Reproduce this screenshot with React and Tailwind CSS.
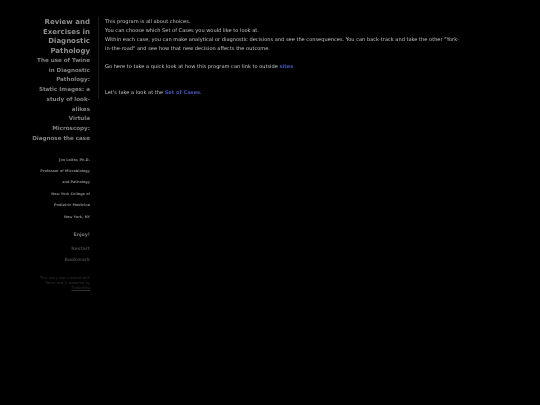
export default function App() {
  const font = { fontFamily: '"DejaVu Sans", Verdana, sans-serif' };
  return (
    <div className="min-h-[405px] w-[540px] bg-black flex items-start overflow-hidden antialiased [text-rendering:geometricPrecision]" style={font}>
      <aside className="w-[90px] shrink-0 pl-[20px] pt-[18px] text-right font-bold will-change-transform">
        <h1 className="text-[7px] leading-[9.7px] text-[#8f8f8f] font-bold">Review and Exercises in Diagnostic Pathology</h1>
        <div className="text-[5.6px] leading-[9.75px] text-[#808080]">
          <p>The use of Twine</p>
          <p>in Diagnostic</p>
          <p>Pathology:</p>
          <p>Static Images: a</p>
          <p>study of look-</p>
          <p>alikes</p>
          <p>Virtula</p>
          <p>Microscopy:</p>
          <p>Diagnose the case</p>
        </div>
        <div className="mt-[10px] text-[3.45px] leading-[11.4px] text-[#808080]">
          <p>Jim Leifer, Ph.D.</p>
          <p>Professor of Microbiology</p>
          <p>and Pathology</p>
          <p>New York College of</p>
          <p>Podiatric Medicine</p>
          <p>New York, NY</p>
        </div>
        <p className="mt-[7px] text-[4.7px] leading-[11px] text-[#777777]">Enjoy!</p>
        <p className="mt-[3px] text-[4.5px] leading-[11px] text-[#404040]">Restart</p>
        <p className="text-[4.5px] leading-[11px] text-[#404040]">Bookmark</p>
        <p className="ml-auto mt-[10px] w-[52px] text-[3.65px] leading-[5.2px] font-normal text-[#303030]">This story was created with Twine and is powered by <span className="underline">TiddlyWiki</span></p>
      </aside>
      <main className="ml-[8px] mt-[17px] w-[365px] border-l border-[#1c1c1c] pl-[6px] pt-[1px] text-[5.08px] leading-[9px] text-[#c4c4c4] will-change-transform">
        <p>This program is all about choices.</p>
        <p>You can choose which Set of Cases you would like to look at.</p>
        <p>Within each case, you can make analytical or diagnostic decisions and see the consequences. You can back-track and take the other "York-in-the-road" and see how that new decision affects the outcome.</p>
        <p className="mt-[9px]">Go here to take a quick look at how this program can link to outside <a className="font-bold text-[#4358b8]">sites</a></p>
        <p className="mt-[17px]">Let's take a look at the <a className="font-bold text-[#4358b8]">Set of Cases</a>.</p>
      </main>
    </div>
  );
}
